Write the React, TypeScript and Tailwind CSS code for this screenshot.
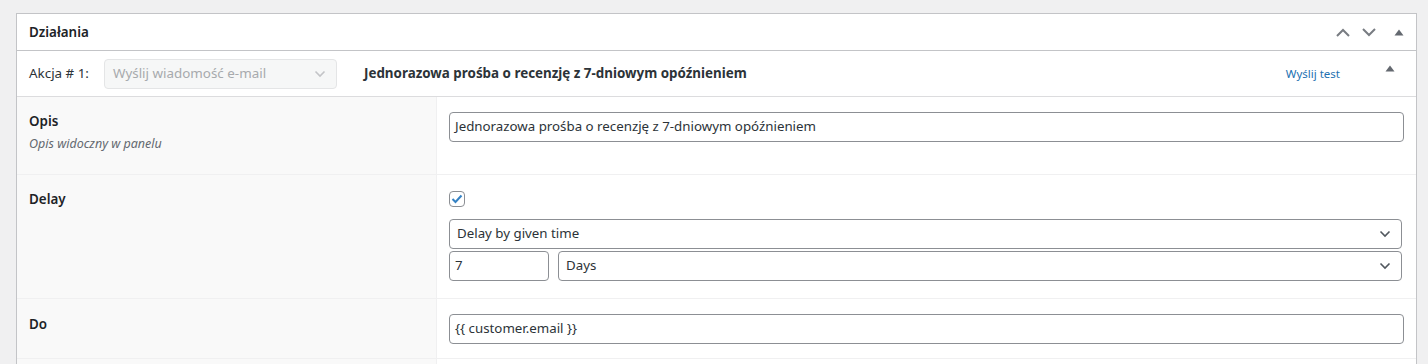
import React from "react";

const font = { fontFamily: '"Noto Sans", "Open Sans", sans-serif' };

function Chevron({ className = "" }: { className?: string }) {
  return (
    <svg width="12" height="8" viewBox="0 0 12 8" className={className}>
      <path d="M1.5 1.5 L6 6 L10.5 1.5" fill="none" stroke="currentColor" strokeWidth="1.6" />
    </svg>
  );
}

function Tri({ className = "" }: { className?: string }) {
  return (
    <svg width="10" height="7" viewBox="0 0 10 7" className={className}>
      <path d="M5 0.5 L9.5 6.5 L0.5 6.5 Z" fill="currentColor" />
    </svg>
  );
}

function Select({ value, className = "" }: { value: string; className?: string }) {
  return (
    <div
      className={`h-[30px] border border-[#8c8f94] rounded-[4px] bg-white flex items-center justify-between pl-[7px] pr-[10px] text-[13.3px] text-[#2c3338] ${className}`}
    >
      <span>{value}</span>
      <Chevron className="text-[#50575e]" />
    </div>
  );
}

function Input({ value, className = "" }: { value: string; className?: string }) {
  return (
    <div
      className={`h-[30px] border border-[#8c8f94] rounded-[4px] bg-white flex items-center pl-[5px] text-[13.3px] text-[#2c3338] ${className}`}
    >
      {value}
    </div>
  );
}

function Row({
  label,
  desc,
  children,
  labelPad = "pt-[16px]",
}: {
  label: string;
  desc?: string;
  children: React.ReactNode;
  labelPad?: string;
}) {
  return (
    <div className="grid grid-cols-[420px_1fr] border-b border-[#f0f0f1]">
      <div className={`bg-[#f9f9f9] border-r border-[#f0f0f1] pl-[12px] ${labelPad}`}>
        <div className="text-[13.4px] font-semibold text-[#1d2327] leading-[18px]">{label}</div>
        {desc && <div className="text-[12.5px] italic text-[#646970] mt-[5px] leading-[18px]">{desc}</div>}
      </div>
      <div className="pl-[12px] pr-[12px]">{children}</div>
    </div>
  );
}

export default function App() {
  return (
    <div className="w-[1428px] h-[364px] bg-[#f0f0f1] pt-[13px] pl-[16px] pr-[11px] overflow-hidden" style={font}>
      <div className="bg-white border border-[#c3c4c7] border-b-0 h-[400px]">
        {/* Header */}
        <div className="h-[37px] flex items-center justify-between border-b border-[#c3c4c7] pl-[12px] pr-[12px]">
          <div className="text-[13.4px] font-semibold text-[#1d2327]">Działania</div>
          <div className="flex items-center gap-[12px] text-[#787c82]">
            <svg width="14" height="9" viewBox="0 0 14 9">
              <path d="M1 8 L7 2 L13 8" fill="none" stroke="currentColor" strokeWidth="2" />
            </svg>
            <svg width="14" height="9" viewBox="0 0 14 9">
              <path d="M1 1 L7 7 L13 1" fill="none" stroke="currentColor" strokeWidth="2" />
            </svg>
            <Tri className="ml-[6px] text-[#646970]" />
          </div>
        </div>
        {/* Action row */}
        <div className="h-[46px] flex items-center border-b border-[#dcdcde] pl-[12px] pr-[21px]">
          <span className="text-[13.4px] text-[#2c3338]">Akcja # 1:</span>
          <div className="ml-[15px] w-[233px] h-[30px] border border-[#e4e5e6] rounded-[4px] bg-[#f6f7f7] flex items-center justify-between pl-[8px] pr-[10px] text-[13.4px] text-[#a7aaad]">
            <span>Wyślij wiadomość e-mail</span>
            <Chevron className="text-[#c3c4c7]" />
          </div>
          <span className="ml-[27px] text-[13.4px] font-bold text-[#2c3338]">
            Jednorazowa prośba o recenzję z 7-dniowym opóźnieniem
          </span>
          <span className="ml-auto text-[11.5px] text-[#2271b1]">Wyślij test</span>
          <Tri className="ml-[45px] mb-[10px] text-[#646970]" />
        </div>
        {/* Table */}
        <Row label="Opis" desc="Opis widoczny w panelu" labelPad="pt-[15px]">
          <div className="pt-[15px] pb-[32px]">
            <Input value="Jednorazowa prośba o recenzję z 7-dniowym opóźnieniem" />
          </div>
        </Row>
        <Row label="Delay" labelPad="pt-[15px]">
          <div className="pt-[16px] pb-[17px]">
            <div className="w-[16px] h-[16px] border border-[#8c8f94] rounded-[4px] flex items-center justify-center">
              <svg width="12" height="10" viewBox="0 0 12 10">
                <path d="M1.5 5 L4.5 8 L10.5 1.5" fill="none" stroke="#3582c4" strokeWidth="2" />
              </svg>
            </div>
            <Select value="Delay by given time" className="mt-[12px] mr-[2px]" />
            <div className="flex gap-[9px] mt-[2px] mr-[2px]">
              <Input value="7" className="w-[100px]" />
              <Select value="Days" className="flex-1 pl-[5px]" />
            </div>
          </div>
        </Row>
        <Row label="Do" labelPad="pt-[16px]">
          <div className="pt-[15px] pb-[14px]">
            <Input value="{{ customer.email }}" />
          </div>
        </Row>
        <Row label="">
          <div className="h-[20px]" />
        </Row>
      </div>
    </div>
  );
}
